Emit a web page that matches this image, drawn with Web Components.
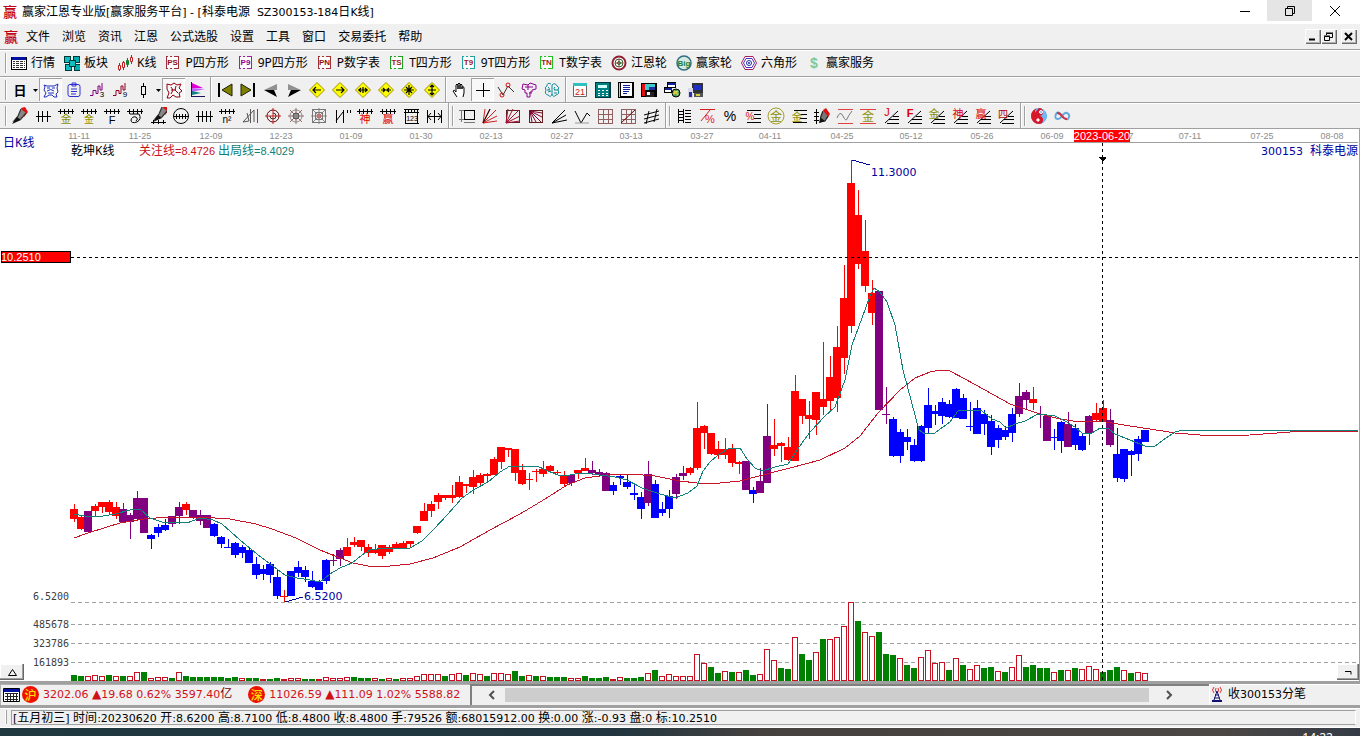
<!DOCTYPE html>
<html lang="zh-CN">
<head>
<meta charset="utf-8">
<title>赢家江恩专业版</title>
<style>
html,body{margin:0;height:100%}
body{font:12px/16px "Noto Sans","Noto Sans CJK SC",sans-serif;color:#000;background:#f0f0f0;overflow:hidden}
</style>
</head>
<body>
<trade-app></trade-app>

<template id="t-app">
<style>
:host{display:flex;flex-direction:column;height:100vh}
k-chart{flex:1;min-height:0}
.n{font-family:"DejaVu Sans",sans-serif;font-size:11px}
</style>
<title-bar>赢家江恩专业版[赢家服务平台] - [科泰电源&nbsp; SZ300153-184日K线]</title-bar>
<menu-bar></menu-bar>
<tool-strip id="r1" style="--h:27px"></tool-strip>
<tool-strip id="r2" style="--h:26px"></tool-strip>
<tool-strip id="r3" style="--h:26px"></tool-strip>
<k-chart></k-chart>
<quote-bar>
  <index-quote badge="沪" value="3202.06" change="19.68" rest="0.62% 3597.40" unit="亿"></index-quote>
  <index-quote badge="深" value="11026.59" change="111.09" rest="1.02% 5588.82"></index-quote>
  <span slot="feed">收<span class="n">300153</span>分笔</span>
</quote-bar>
<status-line>[五月初三] 时间:20230620 开:8.6200 高:8.7100 低:8.4800 收:8.4800 手:79526 额:68015912.00 换:0.00 涨:-0.93 盘:0 标:10.2510</status-line>
<task-bar>14:22</task-bar>
</template>

<template id="t-title">
<style>
:host{display:flex;height:24px;background:#fff;align-items:center}
b{font-size:14px;color:#c00010;width:22px;box-sizing:border-box;padding-left:3px;font-weight:500}
.t{flex:1;white-space:nowrap}
.w{display:flex;align-self:flex-start;padding-right:3px}
button{width:45px;height:21px;border:0;background:none;padding:0;display:grid;place-items:center}
button.on{background:#e5e5e5}
svg{width:12px;height:12px;fill:none;stroke:#000}
</style>
<b>赢</b><span class="t"><slot></slot></span>
<span class="w">
<button aria-label="最小化"><svg><path d="M1 6.5h10" shape-rendering="crispEdges"/></svg></button>
<button class="on" aria-label="还原"><svg><path d="M1.500 3.500h7v7h-7zM3.500 3V1.500h7v7H9"/></svg></button>
<button aria-label="关闭"><svg><path d="M1 1l10 10M11 1L1 11"/></svg></button>
</span>
</template>

<template id="t-menu">
<style>
:host{display:flex;height:26px;box-sizing:border-box;align-items:center;border-bottom:1px solid #a0a0a0}
b{font-size:14px;color:#c00010;width:26px;box-sizing:border-box;padding-left:4px;font-weight:500}
nav{flex:1;display:flex;gap:12px}
button{font:inherit;border:0;background:none;padding:0;white-space:nowrap}
.w{display:flex;margin-right:3px}
.w button{width:16px;height:15px;background:#f0f0f0;box-shadow:inset 1px 1px #fff,inset -1px -1px #696969,inset -2px -2px #b0b0b0;display:grid;place-items:center}
.w button:last-child{margin-left:4px}
svg{width:12px;height:11px;fill:none;stroke:#000}
</style>
<b>赢</b><nav></nav>
<span class="w">
<button aria-label="最小化窗口"><svg><path d="M2 8.500h6" stroke-width="2"/></svg></button>
<button aria-label="还原窗口"><svg><path d="M1.500 5.500h5v4h-5zM3.500 4V2.500h6v4H7M1 5h6M3 2h7"/></svg></button>
<button aria-label="关闭窗口"><svg><path d="M2 2l7 7M9 2L2 9" stroke-width="2"/></svg></button>
</span>
</template>

<template id="t-strip">
<style>
:host{display:flex;height:var(--h);box-sizing:border-box;align-items:center;border-bottom:1px solid #a0a0a0;box-shadow:inset 0 1px #fff;padding-left:5px}
</style>
<slot></slot>
</template>

<template id="t-tool">
<style>
:host{display:block;flex:none}
button{font:inherit;color:inherit;border:0;background:none;padding:0;display:flex;align-items:center;justify-content:center;width:23px;height:23px}
button.wide{width:auto;gap:4px;padding-right:9px;white-space:nowrap}
button.drop{width:8px}
button.on{background:#f8f8f8;box-shadow:inset 1px 1px #a0a0a0,inset -1px -1px #fff}
svg{display:block;flex:none;fill:none;stroke:#000}
svg text{stroke:none;font-family:"Liberation Sans","Noto Sans CJK SC",sans-serif}
</style>
<button></button>
</template>

<template id="t-chart">
<style>
:host{display:block;position:relative;background:#fff;box-shadow:inset -1px 0 #a0a0a0}
svg{display:block;width:100%;height:100%}
text{font:12px "Noto Sans","Noto Sans CJK SC",sans-serif}
.d{font:9px "Liberation Sans",sans-serif;fill:#8c8c8c;text-anchor:middle}
.n{font:11px "Liberation Sans",sans-serif}
.m{font:10px "DejaVu Sans Mono",monospace;fill:#404040;text-anchor:end}
.v{font:11px "DejaVu Sans",sans-serif;fill:#0000a0}
.c{shape-rendering:crispEdges}
button{position:absolute;bottom:1px;height:16px;width:24px;padding:0;border:0;background:#f0f0f0;box-shadow:inset -1px -1px #696969,inset -2px -2px #a0a0a0,inset 1px 1px #fff;display:grid;place-items:center}
button svg{width:11px;height:9px;fill:none;stroke:#000}
.l{left:0}.r{right:1px;width:22px}
</style>
<svg id="g" viewBox="0 129 1360 552" role="img" aria-label="日K线"></svg>
<button class="l" aria-label="展开"><svg><path d="M1.500 7.500L5.500 1.500L9.500 7.500z"/></svg></button>
<button class="r" aria-label="收起"><svg><path d="M2 3.500h6v3"/></svg></button>
</template>

<template id="t-index">
<style>
:host{display:inline-flex;align-items:center;gap:4px;color:#d01018;white-space:nowrap}
i{font:500 12px/17px "Noto Sans CJK SC",sans-serif;width:17px;height:17px;border-radius:50%;background:#f01000;color:#ffe000;text-align:center;flex:none}
.s{font-family:"DejaVu Sans","Noto Sans CJK SC",sans-serif;font-size:11px}
em{font-style:normal;font-size:12px}
u{text-decoration:none;color:#700010;font-size:12px}
</style>
<i></i><span class="s"></span>
</template>

<template id="t-quote">
<style>
:host{display:grid;grid-template-columns:470px 1fr 151px;height:27px;box-sizing:border-box;border-top:3px solid #a0a0a0;border-bottom:3px solid #a0a0a0}
.q{display:flex;align-items:center;overflow:hidden;gap:16px;box-sizing:border-box;padding-left:3px;position:relative;box-shadow:inset 1px 1px #b0b0b0}
.q>svg{width:17px;height:14px;flex:none;margin-right:-14px}
.bar{display:flex;align-items:center;box-shadow:inset 2px 2px #808080;box-sizing:border-box;padding:3px 0 3px 2px}
.bar button{width:33px;height:15px;border:0;background:none;padding:0;display:grid;place-items:center}
.bar button+div+button{width:45px}
.bar svg{width:12px;height:10px;fill:none;stroke:#505050;stroke-width:2}
.th{flex:1;height:14px;background:#cdcdcd}
.pad{width:15px}
.f{display:flex;align-items:center;gap:4px;padding-left:2px;box-shadow:inset 1px 1px #fff}
.f svg{width:13px;height:17px;fill:none}
</style>
<div class="q"><svg><path d="M.5.5h16v13H.5z" fill="#fff" stroke="#000"/><path d="M1 1h15v3H1z" fill="#0010a0"/><path d="M2 5.500h13M2 8.500h13M2 11.500h13M4.500 5v8M7.500 5v8M10.500 5v8M13.500 5v8" stroke="#222" fill="none" shape-rendering="crispEdges"/></svg><slot></slot></div>
<div class="bar" role="group" aria-label="滚动条"><button aria-label="向左"><svg><path d="M11 1L7 5l4 4"/></svg></button><div class="th"></div><button aria-label="向右"><svg><path d="M1 1l4 4l-4 4"/></svg></button><span class="pad"></span></div>
<div class="f"><svg><path d="M3 1q-3 3 0 6M9 1q3 3 0 6M5 2q-1 2 0 4M7 2q1 2 0 4" stroke="#e03030"/><path d="M6 5L3 14M6 5l3 9M4 9h4M3 12h6" stroke="#101070" stroke-width="1"/><path d="M1 15h10" stroke="#101070" stroke-width="2"/></svg><slot name="feed"></slot></div>
</template>

<template id="t-status">
<style>
:host{display:flex;height:20px;box-sizing:border-box;padding:2px 4px 3px 5px;box-shadow:inset 0 1px #fff,inset 0 -1px #fff}
.g{width:2px;height:14px;border-left:1px solid #fff;border-right:1px solid #a0a0a0;margin-right:4px;box-sizing:border-box}
.b{flex:1;min-width:0;border:1px solid #a0a0a0;border-right-color:#fff;padding-left:1px;line-height:14px;white-space:nowrap;overflow:hidden}
</style>
<span class="g"></span><span class="b"><slot></slot></span>
</template>

<template id="t-task">
<style>
:host{display:flex;justify-content:flex-end;height:8px;box-sizing:border-box;padding:2px 27px 0 0;overflow:hidden;color:#fff;background:linear-gradient(90deg,#203840,#20353f 45%,#45413f 56%,#4a4744 90%,#353b46)}
</style>
<span><slot></slot></span>
</template>

<script>
const P=(d,c='#000',w=1,f='none')=>`<path d="${d}" stroke="${c}" stroke-width="${w}" fill="${f}"/>`;
const F=(d,c)=>`<path d="${d}" fill="${c}" stroke="none"/>`;
const T=(s,x,y,z,c,b=400)=>`<text x="${x}" y="${y}" font-size="${z}" fill="${c}" font-weight="${b}" text-anchor="middle">${s}</text>`;
const C=(x,y,r,c,f='none',w=1)=>`<circle cx="${x}" cy="${y}" r="${r}" stroke="${c}" fill="${f}" stroke-width="${w}"/>`;
const G=s=>`<g shape-rendering="crispEdges">${s}</g>`;
const box=(s,c,t)=>G(P('M1.500 1.500h12v12h-12z',c,1,'#fff')+P('M3 1.500h2m2 0h2M3 13.500h2m2 0h2','#f0f0f0'))+T(s,7.5,10,8,t,700);
const diamond=d=>F('M9 1.500L16.500 9L9 16.500L1.500 9z','#ff0')+P('M9 1.500L16.500 9L9 16.500L1.500 9z','#a09000')+P(d,'#000',1.2);
const teeth=G(P('M1 4.500h16M3.500 2v5M7.500 2v5M11.500 2v5M15.500 2v5'));
const fan=P('M5 16.500h12M3 16L16 4M7 12.500h10M11 9.500h6');
const pen=F('M10 1l4-1l3 5l-4 5z','#e01010')+P('M10 2L7 9l-4 5l7-2l5-6','#333',1.2,'#888')+F('M1 17l5-7l4 3z','#111');
const rays=c=>P('M2 16L4 2M2 16L9 2M2 16L15 3M2 16L16 9M2 16L16 14',c);
const grid=G(P('M2.500 2.500h14v14h-14zM2 7.500h15M2 12.500h15M7.500 2v15M12.500 2v15','#906060'));
const burst='M9 1v16M1 9h16M3 3l12 12M15 3L3 15';
const waves='M2 14.500h3v-5h3v3h2V5h2v4h2V2';

const ICONS={
table:F('M0 2h16v13H0z','#fff')+G(P('M.5 2.500h15v12H.5z')+F('M1 2h14v3H1z','#0010a0')+P('M2 6.500h12M2 8.500h12M2 10.500h12M2 12.500h12','#333')+P('M4.500 5v9M8.500 5v9M12.500 5v9','#fff')),
blocks:G(['0 1','9 1','1 9','10 9','5 5'].map((p,i)=>F(`M${p}h6v6h-6z`,i%2?'#00b0b0':'#10c0c0')+P(`M${p}h6v6h-6z`,'#003838')).join('')),
candles:P('M2.500 8v8M6.500 6v9M10.500 3v9M14.500 0v9','#c02020')+P('M1.500 10.500h2v4h-2zM13.500 2.500h2v4h-2z','#c02020',1,'#fff')+P('M5.500 7.500h2v5h-2z','#c02020',1,'#fff')+P('M9.500 5.500h2v4h-2z','#108030',1,'#208030'),
ps:box('PS','#a03038','#901018'),p9:box('P9','#a020a0','#900090'),pn:box('PN','#a03038','#901018'),
ts:box('TS','#20a020','#a02020'),t9:box('T9','#20a0a0','#a02020'),tn:box('TN','#20c020','#a02020'),
wheel:C(8,8,6.500,'#902030','#fff',2)+C(8,8,4,'#306030')+P('M8 4v8M4 8h8','#a02030')+C(8,8,1.5,'#108030'),
big:C(8,8,7,'#307080','#d8e8e0',1.5)+T('Big',8,11,8,'#108040',700),
hex:P('M4 1.500h8l3.500 6.500L12 14.500H4L.5 8z','#a02060',1,'#fff')+P('M5 3.500h6l2.500 4.500l-2.500 4.500H5L2.500 8z','#5030c0')+C(8,8,2.500,'#2030a0')+C(8,8,.7,'#2030a0'),
dollar:T('$',8,13,14,'#80c890',700),

ri:T('日',9,14,13,'#000',700),
down:F('M1 8h5L3.500 11z','#000'),
beast:P('M2 4l3 1h7l4-2l-1 4l1 4l-2 2l1 3h-3l-2-2H7l-3 2H2l2-4L2 9l1-3zM5 7h3M10 7h3M5 10q4-3 7 0M6 12h6','#2030c0'),
clip:P('M5 3.500h8q2 0 2 2v8q0 2-2 2H5q-2 0-2-2v-8q0-2 2-2zM7 2h4v3H7zM6 8h6M6 10.500h6M6 13h5','#3030d0'),
w3:P(waves,'#800080')+T('3',14,16,8,'#000'),
w9:P(waves,'#900020')+T('9',14,16,8,'#000'),
one:G(P('M9.500 2v3M9.500 14v3M7.500 5.500h4v8h-4z')),
bull:P('M2 3l4 1l3-2l3 2l4-1l-2 4l3 3l-3 2l1 4h-4l-3-2l-3 3H2l2-5L2 8zM6 6l2 3l-2 4M11 5l-1 4l3 3M6 9h5','#900010'),
flag:F('M4 2l11 5H4z','#e000d0')+F('M4 7l13 1L4 11z','#c060ff')+F('M4 10l9 2l-9 2z','#108080')+P('M3.500 1v15M3 15.500h14','#201060'),
first:F('M2 2h2v14H2z','#000')+P('M16 3v12L6 9z','#202000',1,'#808000'),
last:F('M14 2h2v14h-2z','#000')+P('M2 3v12l10-6z','#202000',1,'#808000'),
prev:F('M15 3L2 9h13z','#909090')+F('M2 9l13 7l-3-7z','#000'),
next:F('M3 3l13 6H3z','#909090')+F('M16 9L3 16l3-7z','#000'),
a1:diamond('M5 9h8M8 6L5 9l3 3'),a2:diamond('M5 9h8M10 6l3 3l-3 3'),
a3:diamond('M4 9h10M7 7L5 9l2 2M11 7l2 2l-2 2M9 6v6'),a4:diamond('M4 9h10M6 7l2 2l-2 2M12 7l-2 2l2 2'),
a5:diamond('M9 4v10M4 9h10M6 6l6 6M12 6l-6 6'),a6:diamond('M9 4v10M5 9h8M7 6l2-2l2 2M7 12l2 2l2-2'),
hand:P('M6 16l-4-6q1-2 3 1V4q1-2 2 0v4V3q1-2 2 0v5V4q1-2 2 0v4V6q2-1 2 1v5l-1 4','#000',1,'#fff'),
cross:G(P('M9.500 2v14M2 9.500h14')),
nodes:P('M1 6l5 8L11 5l6 6','#333')+C(5,14,2,'#d01010')+C(11,4,2,'#d01010'),
puzzle:P('M3 3l5 1l2-2l6 2v4l-4 1v2h-2v5H7v-4H5V9L2 8zM5 6h8M8 4v5M9 12h3','#900090'),
brain:P('M8 3Q4 1 4 5Q1 6 3 9Q1 13 5 14Q8 17 9 13V4Q12 1 14 5Q17 6 15 9Q17 13 13 14Q10 17 9 13M5 6q2 1 1 3M12 6q-2 1 0 3M5 11l3-1M11 12h3M4 9h3M11 9h4','#108898'),
cal:F('M2 3h14v13H2z','#fff')+P('M2.500 3.500h13v12h-13z','#666')+F('M2 2h14v3H2z','#30c0c0')+T('21',9,14,9,'#d02020'),
calc:G(F('M1 1h16v16H1z','#003840')+F('M2 2h13v14H2z','#008080')+F('M4 4h9v3H4z','#d0ffff')+P('M4 9.500h2m2 0h2m2 0h2M4 12.500h2m2 0h2m2 0h2M4 14.500h2m2 0h2m2 0h2','#fff')),
book:G(F('M1 1h16v16H1z','#000')+F('M4 2h11v13H4z','#fff')+P('M6 4.500h7M6 6.500h7M6 8.500h7M6 10.500h6M6 12.500h4','#1020a0')+P('M2.500 2v14','#ccc',1)),
disk:G(F('M1 2h16v14H1z','#000')+F('M2 3h3v12H2z','#e01010')+F('M5 3h10v6H5z','#40c8d0')+F('M9 6h6v3H9z','#2030a0')+F('M6 11h8v5H6z','#222')+F('M7 11h3v3H7z','#fff')),
net:G(P('M4.500 1.500h8v5h-8zM1.500 6.500h7v5h-7z','#000',1,'#fff')+F('M5 2h8v2H5zM2 7h7v2H2z','#1020a0'))+C(13,12,4,'#000','#50a060')+P('M11 10l4 4M10 13l5-3','#e0d040',1.5),
pc:G(F('M6 2h11v10H6z','#333')+F('M8 4h7v5H8z','#2030c0')+F('M2 7h5v10H2z','#d8d8e8')+F('M3 11h3v5H3z','#3030a0')+F('M8 12h9v4H8z','#555')+F('M10 13h4v2h-4z','#d0d040')),

pen,
ticks:G(P('M2 9.500h15M4.500 4v11M8.500 4v11M13.500 4v11')),
gold1:teeth+T('金',9,16,11,'#909000'),gold2:teeth+T('金',9,16,10,'#909000'),
tf:teeth+T('F',9,17,11,'#000'),
spiral:teeth+P('M4 7h9q3 5-2 8q-6 2-6-2q1-4 5-3q3 2 0 4'),
penr:'<g transform="translate(3 -2)">'+pen+'</g>'+G(P('M2 15.500h15M4.500 13v4M9.500 13v4M14.500 13v4')),
disc:C(9,9,7.500,'#000')+G(P('M2 9.500h15M4.500 7v5M7.500 7v5M10.500 7v5M13.500 7v5')),
ticks4:G(P('M1 9.500h17M3.500 4v11M7.500 4v11M11.500 4v11M15.500 4v11')),
n2:teeth+T('n²',9,16,10,'#000'),
tri:P('M2 15L13 3v12M2 15l6-1L6 6M9.500 2v14M16.500 2v14','#555'),
aim:C(9,9,6,'#600')+P('M9 1v16M1 9h16','#d02020')+P('M9 6a3 3 0 1 1-3 3','#333'),
web1:P(burst,'#a06060')+C(9,9,6,'#888')+C(9,9,3,'#555','#888'),
web2:P(burst,'#888')+G(P('M2.500 2.500h13v13h-13zM5.500 5.500h7v7h-7z','#777'))+C(9,9,2,'#c06060','#c08080'),
nn:G(P('M3.500 3v13M10.500 3v13M14.500 3v3M17.500 3v3'))+P('M3 14l7-9'),
shen:teeth+T('神',9,16,11,'#e00000'),ying:teeth+T('赢',9,16,11,'#e00000'),
ruler:G(P('M2 2.500h15M2 5.500h15M3.500 2v15M6.500 2v4M9.500 2v4M12.500 2v4M15.500 2v14M3 16.500h14'))+T('123',10,14,7,'#000'),
spread:G(P('M2.500 3v13M16.500 3v13M9.500 3v13M3 9.500h13'))+P('M6 6L3 9.500L6 13M13 6l3 3.500l-3 3.500'),
frame:G(P('M6.500 3.500h10v9h-10z')+P('M3.500 3v12M1 3.500h5M1 12.500h5M6 15.500h11','#777')),
rays1:rays('#d02020')+P('M2 16L9 2'),
rays2:G(P('M2.500 3.500h13v12h-13z','#602020'))+rays('#a01030'),
rays3:G(P('M2.500 3.500h13v12h-13z','#602020'))+P('M3 4l12 2M3 4l12 6M3 4l11 11M3 4l6 11M3 4l2 11','#800030'),
fan3:P('M2 16L15 3M2 16L16 8M2 16L17 13'),
vee:P('M2 4l6 12l6-10l3 3')+P('M2 16h14','#999'),
grid1:grid,grid2:grid+P('M2 16L16 3','#600'),
chan:P('M2 8l15-4M2 12l15-4M2 16l15-4M4 17l3-13M12 15l3-13'),
ladder:G(P('M3.500 2v14M8.500 2v14M3 4.500h5M3 7.500h5M3 10.500h5M3 13.500h5M10 3.500h6M10 6.500h6M10 9.500h6M10 12.500h6M10 15.500h6')),
pct1:G(P('M2 2.500h15','#d02020'))+P('M3 14l9-11','#d02020')+T('%',12,16,11,'#e02020'),
pct:T('%',9,14,14,'#000'),
pct2:G(P('M3 3.500h14M10 7.500h7M10 11.500h7M3 15.500h14'))+T('%',6,13,10,'#e02020'),
coin:C(9,9,8,'#a0a030')+T('金',9,14,12,'#909000'),
gold3:G(P('M4 3.500h13M10 7.500h7M10 11.500h7M3 15.500h14'))+T('金',7,14,11,'#909000'),
penb:G(P('M3.500 2v15M1 5.500h5M1 9.500h5M1 13.500h5'))+F('M10 3l3-2l4 6l-3 5z','#e01010')+P('M10 4L8 9l-1 6l5-1l3-5','#222',1.200,'#777')+F('M6 16l2-5l4 3z','#111'),
wave:G(P('M2 2.500h15M2 16.500h15','#e04040'))+P('M1 11q3-8 6-2t4 3t5-8','#777'),
gold4:G(P('M1 2.500h16M1 16.500h16','#e04040'))+T('金',9,14,12,'#909000'),
fj:fan+T('J',5,9,11,'#e00000'),ff:fan+T('F',5,10,11,'#e00000',700),
fg:fan+T('金',6,11,11,'#909000'),fs:fan+T('神',7,11,11,'#e00000'),fy:fan+T('赢',7,11,11,'#e00000'),fq:fan+T('四',6,11,10,'#b00000'),
yin:C(9,9,7.500,'#60b0f0','#70b8f8')+F('M9 1A8 8 0 0 0 9 17A4 4 0 0 0 9 9A4 4 0 0 1 9 1z','#d81828')+F('M9 1a4 4 0 0 1 0 8a4 4 0 0 0-3 3L2 9z','#d81828')+C(11,5,1.500,'#fff','#70b8f8')+C(8,13,1.200,'#fff','#fff'),
inf:P('M9 9Q5 3 3 7Q1 12 5 12Q7 12 9 9Q12 5 14 6Q18 8 15 12Q12 13 9 9','#60a8e0',2)+P('M4 6Q7 6 9 9T14 12','#d03040',2)
};

const make=id=>document.getElementById(id).content.cloneNode(true);
const define=(name,tpl,init)=>customElements.define(name,class extends HTMLElement{
  constructor(){super();this.attachShadow({mode:'open'}).append(make(tpl))}
  connectedCallback(){if(init&&!this.ready){this.ready=true;init.call(this,this.shadowRoot)}}
});
// Latin runs use a face one pixel smaller than the Chinese text beside them.
const latin=function(){
  this.innerHTML=this.textContent.replace(/[\x20-\x7e\xa0]+/g,s=>`<span class="n">${s}</span>`);
};

define('title-bar','t-title',latin);
define('menu-bar','t-menu',function(r){
  r.querySelector('nav').innerHTML='文件 浏览 资讯 江恩 公式选股 设置 工具 窗口 交易委托 帮助'.split(' ').map(s=>`<button>${s}</button>`).join('');
});
define('tool-strip','t-strip');
define('tool-button','t-tool',function(r){
  const b=r.querySelector('button'),n=this.getAttribute('icon'),wide=this.textContent.trim();
  const s=wide?16:18,drop=n==='down',w=drop?7:s;
  b.innerHTML=`<svg width="${w}" height="${s}" viewBox="0 0 ${w} ${s}" aria-hidden="true">${ICONS[n]}</svg>`+(wide?'<slot></slot>':'');
  if(wide)b.className='wide';else{b.className=drop?'drop':this.hasAttribute('on')?'on':'';b.setAttribute('aria-label',n)}
});
customElements.define('tool-gap',class extends HTMLElement{
  constructor(){
    super();
    this.attachShadow({mode:'open'}).innerHTML=`<style>
:host{display:flex;flex:none;align-self:stretch;width:5px;justify-content:center}
:host([kind=grip]){width:3px;align-items:center;justify-content:flex-start}
:host([kind=end]){width:7px;justify-content:center}
i{width:1px;background:#a0a0a0;box-shadow:1px 0 #fff}
:host([kind=grip]) i{height:20px}
</style><i></i>`;
  }
});
define('index-quote','t-index',function(r){
  const a=k=>this.getAttribute(k)||'';
  r.querySelector('i').textContent=a('badge');
  r.querySelector('.s').innerHTML=`${a('value')} <em>▲</em>${a('change')} ${a('rest')}<u>${a('unit')}</u>`;
});
define('quote-bar','t-quote');
define('status-line','t-status',latin);
define('task-bar','t-task');

// One row per day: colour, high, body top, body bottom, low.
const DAYS=`R504 509 519 522,R515 517 529 530,P511 511 532 533,R504 506 511 516,R502 502 507 513,R500 502 512 515,R502 507 516 519,P503 509 522 522,P513 515 522 539,P491 498 519 520,P498 498 533 533,B534 535 539 549,B524 527 533 537,B519 525 530 531,P516 516 524 527,P502 507 516 524,R502 504 510 515,P510 510 517 519,P510 515 521 525,P515 515 528 528,B523 524 536 537,B536 537 544 548,B539 547 548 548,B542 543 555 558,B545 547 553 558,B548 550 563 563,B557 564 575 579,B565 569 574 580,B562 564 575 583,B570 577 596 599,R590 596 597 602,B571 571 596 596,B561 567 573 577,B566 570 577 582,B571 581 587 588,B580 582 590 590,B559 560 581 584,P554 560 561 566,P548 550 559 566,R538 547 556 556,R537 542 545 547,R540 540 547 551,R544 547 553 557,R544 549 553 554,R545 545 556 559,R545 547 552 554,R542 544 549 549,R541 543 549 549,R541 541 544 548,R526 526 533 534,R503 511 521 521,R501 504 511 517,R493 495 502 509,R495 495 498 500,R485 495 498 503,R476 482 497 498,R484 484 486 493,R470 477 487 494,R473 475 483 487,R473 474 476 483,R457 459 475 475,R447 447 462 469,R448 448 450 457,R449 449 473 481,R464 470 484 485,R473 479 480 490,R469 471 472 482,R461 469 474 477,R465 466 471 473,R470 472 473 475,R471 476 484 487,P475 475 483 486,R470 470 473 479,R458 468 471 471,P461 470 473 475,P469 472 475 477,P472 473 491 491,B482 485 491 495,B475 476 478 485,B474 482 487 489,B485 493 495 500,B492 497 509 519,P461 474 503 506,B480 484 518 518,B502 509 513 516,B490 496 509 518,P474 477 494 499,P466 473 476 480,R467 468 473 475,R402 428 468 470,R425 426 433 449,R433 433 454 455,R441 449 455 459,R438 449 455 459,R444 449 463 467,R461 462 464 474,P461 461 490 490,B487 490 494 503,P468 481 493 493,P404 436 483 483,R419 445 449 456,R442 443 446 462,R437 447 460 461,R375 391 461 461,R399 399 416 424,R401 415 419 439,R392 392 420 435,R342 399 407 415,R356 377 401 410,R326 347 398 412,R265 298 358 374,R160 183 326 333,R190 215 264 269,R220 251 286 292,R280 293 313 325,P291 291 410 410,P387 414 415 424,B417 419 456 457,B429 432 456 463,B429 437 442 450,B439 445 461 462,B425 426 461 462,B388 405 428 434,B405 411 414 425,B398 402 416 424,B400 404 417 418,B388 389 418 418,B394 398 419 419,B402 426 427 431,B400 408 434 434,B410 414 424 435,B415 421 447 455,B425 428 440 448,B426 430 437 440,B408 414 433 442,P383 396 414 417,P390 392 400 410,R387 399 403 410,P406 414 415 428,P415 416 441 441,B429 437 438 450,B421 422 441 453,P412 424 447 447,B424 428 445 450,B433 436 450 451,P415 416 433 445,R403 413 420 422,R400 408 421 421,P409 420 445 447,B428 454 478 482,B449 449 479 482,B450 451 455 476,B436 439 454 461,B430 430 442 442`.split(',');
const VOL='G675 G676 R676 R675 R676 G675 R676 G676 R676 R672 G672 R678 R677 R677 G678 R672 G676 G677 G677 G677 G677 G677 G678 G677 R678 G678 G678 R679 G679 G678 R679 R678 R678 G679 G679 R679 R677 R678 R678 R677 G677 G678 G678 R678 G679 R678 G679 R678 R678 R676 R674 R674 R674 G676 R674 R673 G675 R673 R674 G676 R673 R673 R674 G671 G676 R675 G676 R676 G677 G677 G677 R678 R678 G676 G678 G678 G677 R679 R677 G678 G678 G677 R673 G670 R676 R674 R676 R676 R676 R654 R663 G667 G673 R671 G672 R672 G670 G675 R674 R649 R660 G668 G669 R637 G654 G660 R652 G639 R639 R637 R626 R602 G621 R632 R636 G632 G654 G655 R658 G665 G668 R657 R650 R663 R662 G670 R658 G665 R669 R665 G668 G667 R671 G672 R667 R655 G667 G665 G668 G668 R672 G670 R670 G668 R669 R666 R669 G672 G670 G667 R670 G673 R672 R673'.split(' ');
const SLOW='74,538 88,533 104,528 120,523 144,519 168,517 200,517 230,519 256,524 272,529 296,538 320,550 340,558 353,563 368,566 390,566 410,564 433,558 460,547 490,530 520,514 545,499 567,485 585,478 607,475 630,474 655,476 680,481 697,483 720,483 740,481 755,477 790,468 820,460 845,448 860,436 878,413 900,390 915,378 930,372 940,370 950,371 965,379 985,390 1010,404 1040,414 1060,419 1080,422 1100,421 1130,426 1150,429 1175,433 1200,435 1215,436 1250,435 1290,432 1320,431 1358,431';
const FAST='74,514 90,517 103,516 115,514 130,510 140,509 150,518 165,523 180,522 187,523 200,518 213,520 222,524 240,540 257,554 270,564 285,575 297,578 310,580 320,582 330,574 340,568 352,563 362,555 370,550 385,548 410,548 422,541 434,529 448,514 462,498 475,489 488,482 500,472 510,466 537,466 548,471 558,475 565,476 575,474 585,473 600,475 615,477 627,480 642,488 660,494 675,498 688,493 697,486 703,471 710,462 718,455 728,449 740,448 747,459 755,468 762,471 775,467 788,464 797,450 810,432 825,416 835,407 845,380 852,345 862,318 870,296 874,288 880,292 887,302 895,325 903,370 911,400 919,430 925,434 935,433 943,427 950,422 958,411 970,410 982,411 992,419 1000,422 1006,428 1015,424 1025,421 1038,414 1055,416 1065,421 1075,427 1083,434 1092,433 1100,428 1108,428 1115,434 1130,440 1145,446 1154,447 1163,440 1175,432 1183,430 1358,430';
const DATES='79 11-11,140 11-25,211 12-09,281 12-23,351 01-09,421 01-30,491 02-13,562 02-27,631 03-13,702 03-27,770 04-11,842 04-25,911 05-12,982 05-26,1052 06-09,1122 06-27,1190 07-11,1262 07-25,1332 08-08';

define('k-chart','t-chart',function(r){
  const col={R:'#f00',P:'#800080',B:'#00f',G:'#008000'};
  let s='<g class="c"><path d="M71 142.500H1358" stroke="#a0a0a0"/>';
  for(const y of [602,624,643,662])s+=`<path d="M71 ${y}.5H1358" stroke="#a0a0a0" stroke-dasharray="4 3"/>`;
  VOL.forEach((v,i)=>{
    const y=+v.slice(1),x=71+7*i,h=681-y;
    s+=v[0]==='G'?`<rect x="${x}" y="${y}" width="6" height="${h}" fill="#008000"/>`:`<rect x="${x+.5}" y="${y+.5}" width="5" height="${h-1}" fill="#fff" stroke="#c81020"/>`;
  });
  DAYS.forEach((d,i)=>{
    const [h,t,b,l]=d.slice(1).split(' ').map(Number),x=70+7*i,c=col[d[0]];
    s+=`<path d="M${x+4} ${h}h1V${l}h-1zM${x} ${t}h8V${b}h-8z" fill="${c}"/>`;
  });
  s+=`<polyline points="${SLOW}" fill="none" stroke="#c81428"/><polyline points="${FAST}" fill="none" stroke="#108078"/>`;
  s+='<path d="M71 257.500H1358M1102.500 143V681" stroke="#000" stroke-dasharray="3 3" fill="none"/>';
  s+='<path d="M1099 157h7v1l-3 3h-1l-3-3z"/><path d="M852 160l18 5M285 602l18-5" stroke="#0000a0" fill="none"/>';
  s+='<rect x="1.500" y="251.500" width="69" height="11" fill="#f00" stroke="#000"/></g>';
  s+=DATES.split(',').map(d=>{const [x,t]=d.split(' ');return `<text class="d" x="${x}" y="139">${t}</text>`}).join('');
  s+='<rect x="1074" y="130" width="56" height="12" fill="#f00"/><text class="n" x="1102" y="140" text-anchor="middle" fill="#fff">2023-06-20</text>';
  s+='<text class="n" x="1" y="261" fill="#fff">10.2510</text>';
  s+='<text x="3" y="147" fill="#0000a0">日K线</text><text x="71" y="155">乾坤K线</text>';
  s+='<text x="139" y="155" fill="#c81020">关注线<tspan class="n">=8.4726</tspan></text><text x="218" y="155" fill="#108078">出局线<tspan class="n">=8.4029</tspan></text>';
  s+='<text x="1358" y="155" text-anchor="end" fill="#0000a0"><tspan class="v">300153&#160;&#160;</tspan>科泰电源</text>';
  s+='<text class="v" x="871" y="176">11.3000</text><text class="v" x="304" y="600">6.5200</text>';
  s+='<text class="m" x="69" y="600">6.5200</text><text class="m" x="69" y="628">485678</text><text class="m" x="69" y="647">323786</text><text class="m" x="69" y="666">161893</text>';
  r.getElementById('g').innerHTML=s;
});

define('trade-app','t-app',function(r){
  // "|" separator, "{" grip, "]" end of a band, "*" pressed.
  const fill=(id,list)=>{
    r.getElementById(id).innerHTML='<tool-gap kind="grip"></tool-gap>'+list.split(' ').map(t=>
      t==='|'?'<tool-gap></tool-gap>':t===']'?'<tool-gap kind="end"></tool-gap>':t==='{'?'<tool-gap kind="grip"></tool-gap>':
      `<tool-button icon="${t.replace('*','')}"${t.includes('*')?' on':''}></tool-button>`).join('');
  };
  const named='table:行情 blocks:板块 candles:K线 ps:P四方形 p9:9P四方形 pn:P数字表 ts:T四方形 t9:9T四方形 tn:T数字表 wheel:江恩轮 big:赢家轮 hex:六角形 dollar:赢家服务';
  r.getElementById('r1').innerHTML='<tool-gap kind="grip" style="margin-right:3px"></tool-gap>'+named.split(' ').map(t=>{const [i,n]=t.split(':');return `<tool-button icon="${i}">${n}</tool-button>`}).join('');
  fill('r2','ri down beast* clip w3 w9 one down bull* flag | first last prev next a1 a2 a3 a4 a5 a6 | hand cross* nodes puzzle brain | cal calc book disk net pc');
  fill('r3','pen ticks gold1 gold2 tf spiral penr disc ticks4 n2 tri aim web1 web2 nn shen ying ruler spread ] { frame rays1 rays2 rays3 fan3 vee grid1 grid2 chan ] { ladder pct1 pct pct2 coin gold3 penb wave gold4 fj ff fg fs fy fq ] { yin inf');
});
</script>
</body>
</html>
